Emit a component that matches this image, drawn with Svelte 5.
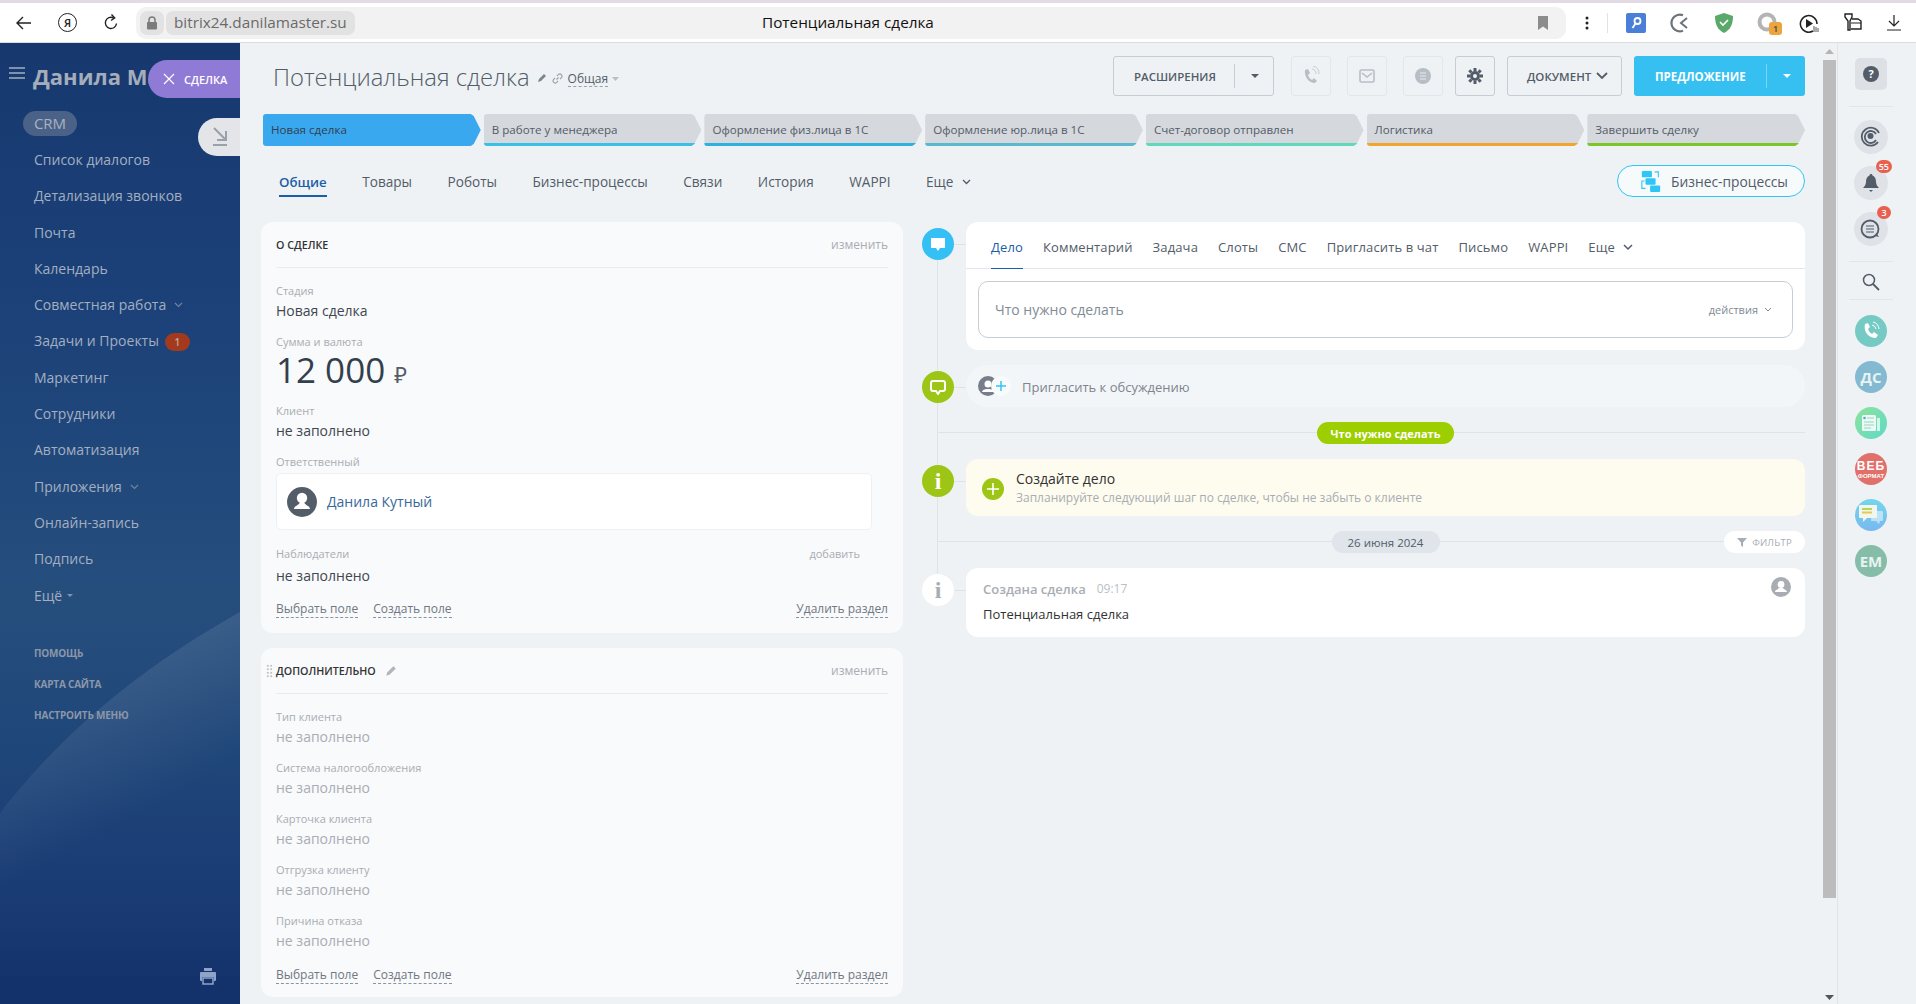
<script>
  const menu = [
    { t: 'Список диалогов' }, { t: 'Детализация звонков' }, { t: 'Почта' }, { t: 'Календарь' },
    { t: 'Совместная работа', chev: true }, { t: 'Задачи и Проекты', badge: '1' }, { t: 'Маркетинг' },
    { t: 'Сотрудники' }, { t: 'Автоматизация' }, { t: 'Приложения', chev: true }, { t: 'Онлайн-запись' },
    { t: 'Подпись' }, { t: 'Ещё', caret: true }
  ];
  const stages = [
    ['Новая сделка', '#39a8ef'], ['В работе у менеджера', '#39c0e6'], ['Оформление физ.лица в 1С', '#2fb1df'],
    ['Оформление юр.лица в 1С', '#5ab9cf'], ['Счет-договор отправлен', '#5fd9bb'], ['Логистика', '#f2a52d'], ['Завершить сделку', '#7cc726']
  ];
  const tabs = ['Товары', 'Роботы', 'Бизнес-процессы', 'Связи', 'История', 'WAPPI'];
  const ctabs = ['Комментарий', 'Задача', 'Слоты', 'СМС', 'Пригласить в чат', 'Письмо', 'WAPPI'];
  const extra = ['Тип клиента', 'Система налогообложения', 'Карточка клиента', 'Отгрузка клиенту', 'Причина отказа'];
</script>

<div class="app">
  <header class="browser">
    <div class="nav">
      <svg class="ic" width="20" height="20" viewBox="0 0 20 20"><path d="M17 10H3M9 4l-6 6 6 6" fill="none" stroke="#222" stroke-width="1.4"/></svg>
      <span class="ya">Я</span>
      <svg class="ic" width="20" height="20" viewBox="0 0 20 20"><path d="M15.5 10.5a5.6 5.6 0 1 1-3-5.6" fill="none" stroke="#222" stroke-width="1.4"/><path d="M10.5 1.5l3.2 3.4-3.6 2.6" fill="none" stroke="#222" stroke-width="1.4"/></svg>
    </div>
    <div class="addr">
      <span class="lock"><svg width="12" height="14" viewBox="0 0 12 14"><path d="M3 6V4a3 3 0 0 1 6 0v2" fill="none" stroke="#7b7b7b" stroke-width="1.5"/><rect x="1" y="6" width="10" height="7.5" rx="1" fill="#7b7b7b"/></svg></span>
      <span class="url">bitrix24.danilamaster.su</span>
      <span class="ptitle">Потенциальная сделка</span>
      <svg class="bm" width="12" height="14" viewBox="0 0 12 14"><path d="M1 0h10v14l-5-3.5L1 14z" fill="#8c8c8c"/></svg>
    </div>
    <div class="exts">
      <svg width="4" height="14" viewBox="0 0 4 14"><circle cx="2" cy="2" r="1.5" fill="#222"/><circle cx="2" cy="7" r="1.5" fill="#222"/><circle cx="2" cy="12" r="1.5" fill="#222"/></svg>
      <span class="sep"></span>
      <svg class="e1" width="20" height="20" viewBox="0 0 20 20"><rect width="20" height="20" rx="2" fill="#4a7fd8"/><circle cx="11.5" cy="8" r="3" fill="none" stroke="#fff" stroke-width="1.8"/><path d="M9.5 10.5L6.5 15" stroke="#fff" stroke-width="1.8"/></svg>
      <svg class="e2" width="20" height="20" viewBox="0 0 20 20"><path d="M13 2.2A8.4 8.4 0 1 0 13 17.8" fill="none" stroke="#6b7278" stroke-width="2.2"/><path d="M17 5l-6 5 6 5" fill="none" stroke="#6b7278" stroke-width="2"/></svg>
      <svg class="e3" width="20" height="20" viewBox="0 0 20 20"><path d="M10 0l9 3c0 9-3 14-9 17C4 17 1 12 1 3z" fill="#5aa96a"/><path d="M6 9l3 3 5-5" fill="none" stroke="#fff" stroke-width="1.6"/></svg>
      <span class="e4"><svg width="22" height="22" viewBox="0 0 22 22"><circle cx="10" cy="10" r="7.5" fill="none" stroke="#b4b4b4" stroke-width="4"/></svg><b>1</b></span>
      <svg class="e5" width="22" height="20" viewBox="0 0 22 20"><path d="M14 18a8.3 8.3 0 1 1 4-7" fill="none" stroke="#222" stroke-width="1.5"/><path d="M7 6l7 4.5L7 15z" fill="#222"/><path d="M15 13v6M17 14v5M19 15v4" stroke="#555" stroke-width="1"/></svg>
      <svg class="e6" width="18" height="20" viewBox="0 0 18 20"><path d="M1 1h7v3L6 8v9H4V8L1 4z" fill="none" stroke="#222" stroke-width="1.4"/><path d="M8 6h6l3 2v8H7" fill="none" stroke="#222" stroke-width="1.4"/><path d="M7 10h10" stroke="#222"/></svg>
      <svg class="e7" width="14" height="16" viewBox="0 0 14 16"><path d="M7 0v11M2 6l5 5 5-5M0 15h14" fill="none" stroke="#222" stroke-width="1.2"/></svg>
    </div>
  </header>

  <div class="body">
    <aside class="side">
      <svg class="side-wedge" width="240" height="961" viewBox="0 0 240 961">
        <defs><linearGradient id="wg" gradientUnits="userSpaceOnUse" x1="150" y1="610" x2="215" y2="730"><stop offset="0" stop-color="#fff" stop-opacity=".1"/><stop offset="1" stop-color="#fff" stop-opacity="0"/></linearGradient></defs>
        <path d="M240 569C150 620 70 680 0 770V961H240Z" fill="url(#wg)"/>
      </svg>
      <div class="brand">
        <svg width="16" height="12" viewBox="0 0 16 12"><path d="M0 1h16M0 6h16M0 11h16" stroke="#a3afc0" stroke-width="1.6"/></svg>
        <span>Данила Ма</span>
      </div>
      <div class="crm"><span>CRM</span></div>
      <ul class="menu">
        {#each menu as m}
          <li>
            {m.t}
            {#if m.chev}<svg class="chev" width="9" height="6" viewBox="0 0 9 6"><path d="M1 1l3.5 3.5L8 1" fill="none" stroke="#6f84a3" stroke-width="1.2"/></svg>{/if}
            {#if m.caret}<svg class="caretm" width="6" height="4" viewBox="0 0 6 4"><path d="M0 0h6L3 3z" fill="#7f93ad"/></svg>{/if}
            {#if m.badge}<b class="mbadge">{m.badge}</b>{/if}
          </li>
        {/each}
      </ul>
      <ul class="foot">
        <li>Помощь</li><li>Карта сайта</li><li>Настроить меню</li>
      </ul>
      <svg class="printer" width="16" height="17" viewBox="0 0 16 17"><path d="M4 0h8v3H4z" fill="#8fa3c8"/><path d="M1 4h14a1 1 0 0 1 1 1v7a1 1 0 0 1-1 1h-1V9H2v4H1a1 1 0 0 1-1-1V5a1 1 0 0 1 1-1z" fill="#8fa3c8"/><path d="M3 10h10v6H3z" fill="none" stroke="#8fa3c8" stroke-width="1.5"/></svg>
      <div class="close-pill"><svg width="12" height="12" viewBox="0 0 12 12"><path d="M1 1l10 10M11 1L1 11" stroke="#fff" stroke-width="1.2"/></svg><b>СДЕЛКА</b></div>
      <div class="pin-pill"><svg width="16" height="20" viewBox="0 0 16 20"><path d="M2 1l12 12M14 4v9H5M1 18h14" fill="none" stroke="#9aa1ab" stroke-width="2"/></svg></div>
    </aside>

    <main class="main">
      <div class="head">
        <h1>Потенциальная сделка</h1>
        <svg class="hi" width="10" height="10" viewBox="0 0 10 10"><path d="M1 9l1-3 5-5 2 2-5 5z" fill="#7d858f"/></svg>
        <svg class="hi" width="11" height="11" viewBox="0 0 11 11"><path d="M4.5 6.5l2-2M3 5L1.7 6.3a2 2 0 0 0 3 3L6 8M5 3l1.3-1.3a2 2 0 0 1 3 3L8 6" fill="none" stroke="#9aa1a9" stroke-width="1.1"/></svg>
        <span class="cat">Общая</span>
        <svg class="caret" width="7" height="4" viewBox="0 0 7 4"><path d="M0 0h7L3.5 4z" fill="#b9bfc6"/></svg>
        <div class="actions">
          <div class="btn ext"><span class="lbl">РАСШИРЕНИЯ</span><i class="vsep"></i><svg width="8" height="4" viewBox="0 0 8 4"><path d="M0 0h8L4 4z" fill="#535c69"/></svg></div>
          <div class="sq dim"><svg width="18" height="20" viewBox="0 0 18 20"><path d="M3 4l3-1 2 4-2 2c.6 2 2 4 4 5l2-2 3 3-2 2c-6 0-11-6-10-13z" fill="#b7bec6"/><path d="M10 3a5 5 0 0 1 4 5M11 0a8 8 0 0 1 6 8" fill="none" stroke="#c6ccd2"/></svg></div>
          <div class="sq dim"><svg width="16" height="14" viewBox="0 0 16 14"><rect x="1" y="1" width="14" height="12" rx="1.5" fill="none" stroke="#b7bec6" stroke-width="1.6"/><path d="M3 4l5 4 5-4" fill="none" stroke="#b7bec6" stroke-width="1.6"/></svg></div>
          <div class="sq dim"><svg width="18" height="18" viewBox="0 0 18 18"><circle cx="9" cy="9" r="8" fill="#b7bec6"/><path d="M6 6h6M6 9h6M6 12h6" stroke="#e9ecef" stroke-width="1.2"/></svg></div>
          <div class="sq gear"><svg width="18" height="18" viewBox="0 0 18 18"><path d="M9 5.5a3.5 3.5 0 1 0 0 7 3.5 3.5 0 0 0 0-7z" fill="none" stroke="#535c69" stroke-width="3"/><path d="M9 1v3M9 14v3M1 9h3M14 9h3M3.3 3.3l2.2 2.2M12.5 12.5l2.2 2.2M3.3 14.7l2.2-2.2M12.5 5.5l2.2-2.2" stroke="#535c69" stroke-width="3"/></svg></div>
          <div class="btn doc"><span class="lbl">ДОКУМЕНТ</span><svg width="12" height="8" viewBox="0 0 12 8"><path d="M1 1l5 5 5-5" fill="none" stroke="#535c69" stroke-width="1.8"/></svg></div>
          <div class="btn offer"><span class="lbl">ПРЕДЛОЖЕНИЕ</span><i class="vsep"></i><svg width="8" height="4" viewBox="0 0 8 4"><path d="M0 0h8L4 4z" fill="#fff"/></svg></div>
        </div>
      </div>

      <div class="stages">
        {#each stages as s, i}
          <div class="stage" class:on={i === 0} style="--c:{s[1]}"><span>{s[0]}</span></div>
        {/each}
      </div>

      <div class="tabsrow">
        <nav class="tabs">
          <span class="tab active">Общие</span>
          {#each tabs as t}<span class="tab">{t}</span>{/each}
          <span class="tab">Еще <svg width="9" height="6" viewBox="0 0 9 6"><path d="M1 1l3.5 3.5L8 1" fill="none" stroke="#535c69" stroke-width="1.3"/></svg></span>
        </nav>
        <div class="bp">
          <svg width="24" height="24" viewBox="0 0 24 24"><rect x="2" y="1" width="11" height="7" rx="1" fill="#2fc6f6"/><rect x="6" y="9" width="11" height="7" rx="1" fill="#2fc6f6"/><rect x="11" y="17" width="11" height="7" rx="1" fill="#2fc6f6"/><path d="M16 2h4v6M5 12H2v8h4" fill="none" stroke="#2fc6f6" stroke-width="1.2"/></svg>
          <span>Бизнес-процессы</span>
        </div>
      </div>

      <div class="cols">
        <section class="left">
          <div class="card c1">
            <div class="chead"><b>О сделке</b><span class="chg">изменить</span></div>
            <div class="lab">Стадия</div><div class="val">Новая сделка</div>
            <div class="lab g">Сумма и валюта</div>
            <div class="amount">12 000 <span class="rub">₽</span></div>
            <div class="lab g">Клиент</div><div class="val">не заполнено</div>
            <div class="lab g">Ответственный</div>
            <div class="user">
              <svg width="30" height="30" viewBox="0 0 30 30"><circle cx="15" cy="15" r="15" fill="#535c69"/><circle cx="15" cy="11" r="5.2" fill="#fff"/><path d="M7 22c0-3 5-4 5.5-6h5c.5 2 5.5 3 5.5 6z" fill="#fff"/></svg>
              <span>Данила Кутный</span>
            </div>
            <div class="lab obs"><span>Наблюдатели</span><span class="add">добавить</span></div>
            <div class="val v4">не заполнено</div>
            <div class="links"><span>Выбрать поле</span><span>Создать поле</span><span class="del">Удалить раздел</span></div>
          </div>

          <div class="card c2">
            <div class="dots"></div>
            <div class="chead"><b>Дополнительно <svg width="12" height="12" viewBox="0 0 10 10"><path d="M1 9l1-3 5-5 2 2-5 5z" fill="#b0b6bd"/></svg></b><span class="chg">изменить</span></div>
            {#each extra as e, i}
              <div class="lab" class:g={i > 0}>{e}</div><div class="val mute">не заполнено</div>
            {/each}
            <div class="links"><span>Выбрать поле</span><span>Создать поле</span><span class="del">Удалить раздел</span></div>
          </div>
        </section>

        <section class="tl">
          <div class="rail"></div>

          <div class="row">
            <span class="dot blue"><svg width="16" height="15" viewBox="0 0 16 15"><path d="M1 1h14v10H10l-2 3-2-3H1z" fill="#fff"/></svg></span>
            <div class="composer">
              <div class="ctabs">
                <span class="ct active">Дело</span>
                {#each ctabs as t}<span class="ct">{t}</span>{/each}
                <span class="ct">Еще <svg width="10" height="7" viewBox="0 0 10 7"><path d="M1 1l4 4 4-4" fill="none" stroke="#535c69" stroke-width="1.5"/></svg></span>
              </div>
              <div class="input">
                <span>Что нужно сделать</span>
                <em>действия <svg width="8" height="5" viewBox="0 0 8 5"><path d="M1 1l3 3 3-3" fill="none" stroke="#828b95" stroke-width="1"/></svg></em>
              </div>
            </div>
          </div>

          <div class="row">
            <span class="dot green"><svg width="16" height="16" viewBox="0 0 16 16"><path d="M3 2h10a2 2 0 0 1 2 2v6a2 2 0 0 1-2 2h-3l-2 3-2-3H3a2 2 0 0 1-2-2V4a2 2 0 0 1 2-2z" fill="none" stroke="#fff" stroke-width="2"/></svg></span>
            <div class="invite">
              <span class="inv-ic">
                <svg width="20" height="20" viewBox="0 0 20 20"><circle cx="10" cy="10" r="10" fill="#757e8a"/><circle cx="10" cy="8" r="3.5" fill="#fff"/><path d="M4 16c1-3 4-3 6-3s5 0 6 3z" fill="#fff"/></svg>
                <i><svg width="10" height="10" viewBox="0 0 10 10"><path d="M5 0v10M0 5h10" stroke="#2fc6f6" stroke-width="1.5"/></svg></i>
              </span>
              <span class="inv-t">Пригласить к обсуждению</span>
            </div>
          </div>

          <div class="sepr"><span class="todo">Что нужно сделать</span></div>

          <div class="row">
            <span class="dot green ii">i</span>
            <div class="todo-card">
              <span class="plus"><svg width="12" height="12" viewBox="0 0 12 12"><path d="M6 0v12M0 6h12" stroke="#fff" stroke-width="1.6"/></svg></span>
              <div class="tbody"><div class="tt">Создайте дело</div><div class="ts">Запланируйте следующий шаг по сделке, чтобы не забыть о клиенте</div></div>
            </div>
          </div>

          <div class="sepr date"><span class="dp">26 июня 2024</span><span class="flt"><svg width="10" height="9" viewBox="0 0 10 9"><path d="M0 0h10L6 4.5V9L4 7.5v-3z" fill="#a8adb4"/></svg>ФИЛЬТР</span></div>

          <div class="row">
            <span class="dot white ii">i</span>
            <div class="hist">
              <div class="hhead"><b>Создана сделка</b><span>09:17</span>
                <svg width="20" height="20" viewBox="0 0 20 20"><circle cx="10" cy="10" r="10" fill="#a8adb4"/><circle cx="10" cy="7.5" r="3.4" fill="#fff"/><path d="M4 15c0-2 3-2.500 4-4h4c1 1.500 4 2 4 4z" fill="#fff"/></svg>
              </div>
              <div class="htext">Потенциальная сделка</div>
            </div>
          </div>
        </section>
      </div>
    </main>

    <div class="scroll">
      <svg width="9" height="5" viewBox="0 0 9 5"><path d="M0 5L4.500 0 9 5z" fill="#b5b5b5"/></svg>
      <div class="thumb"></div>
      <svg class="sd" width="9" height="5" viewBox="0 0 9 5"><path d="M0 0L4.500 5 9 0z" fill="#555"/></svg>
    </div>

    <aside class="right">
      <div class="help"><svg width="16" height="16" viewBox="0 0 16 16"><circle cx="8" cy="8" r="8" fill="#535c69"/><text x="8" y="12" text-anchor="middle" font-size="11" font-weight="700" fill="#fff" font-family="Open Sans">?</text></svg></div>
      <hr />
      <div class="rb g1"><svg width="22" height="22" viewBox="0 0 22 22"><path d="M18 16a9 9 0 1 1 1-9" fill="none" stroke="#535c69" stroke-width="1.8"/><path d="M16 14a6 6 0 1 1 0-6" fill="none" stroke="#535c69" stroke-width="1.800"/><circle cx="10.500" cy="10" r="3" fill="#535c69"/></svg></div>
      <div class="rb g2"><svg width="18" height="20" viewBox="0 0 18 20"><path d="M9 1c1 0 1.500.7 1.500 1.500C13 3.500 14 6 14 9c0 3 2 5 3 6H1c1-1 3-3 3-6 0-3 1-5.500 3.500-6.500C7.500 1.700 8 1 9 1z" fill="#535c69"/><path d="M7 17h4l-2 2z" fill="#535c69"/></svg><b>55</b></div>
      <div class="rb g3"><svg width="22" height="22" viewBox="0 0 22 22"><circle cx="10" cy="11" r="8.500" fill="none" stroke="#535c69" stroke-width="1.800"/><path d="M6 8h8M6 11h8M6 14h8" stroke="#535c69" stroke-width="1.200"/><path d="M15 18l4 1-2-3z" fill="#535c69"/></svg><b>3</b></div>
      <hr class="h2" />
      <svg class="srch" width="18" height="18" viewBox="0 0 18 18"><circle cx="7" cy="7" r="5.500" fill="none" stroke="#535c69" stroke-width="1.500"/><path d="M11 11l6 6" stroke="#535c69" stroke-width="1.800"/></svg>
      <hr class="h3" />
      <div class="av" style="background:#75cbc4"><svg width="20" height="20" viewBox="0 0 20 20"><path d="M4 3l3-1 2 4-2 2c.6 2 2 4 4 5l2-2 4 3-2 3c-7 0-13-6-11-14z" fill="#fff"/><path d="M11 4a5 5 0 0 1 4 4M12 1a8 8 0 0 1 6 7" fill="none" stroke="#fff" stroke-width="1"/></svg></div>
      <div class="av" style="background:#84b9d2">ДС</div>
      <div class="av" style="background:linear-gradient(135deg,#8ee39c,#5fd9c6)"><svg width="20" height="20" viewBox="0 0 20 20"><rect x="1" y="2" width="14" height="16" rx="1.500" fill="#fff" opacity=".85"/><rect x="16" y="5" width="3" height="13" fill="#fff" opacity=".7"/><path d="M6 5h7M3 9h10M3 12h10M3 15h7" stroke="#9ad3c4"/><circle cx="3.500" cy="5" r="1.300" fill="#5aa3d8"/></svg></div>
      <div class="av web" style="background:#e2706a"><span class="w1">ВЕБ</span><span class="w2">ФОРМАТ</span></div>
      <div class="av" style="background:linear-gradient(180deg,#74d6ec,#79b8f0)"><svg width="26" height="22" viewBox="0 0 26 22"><path d="M14 7h10a1 1 0 0 1 1 1v8a1 1 0 0 1-1 1h-2l-1 3-3-3h-5z" fill="#fff" opacity=".5"/><path d="M2 1h16a1 1 0 0 1 1 1v11a1 1 0 0 1-1 1H9l-4 4v-4H2a1 1 0 0 1-1-1V2a1 1 0 0 1 1-1z" fill="#f3f6ee"/><path d="M4 5h10" stroke="#b5d65a" stroke-width="1.800"/><path d="M4 8.500h10" stroke="#e8c84e" stroke-width="1.800"/></svg></div>
      <div class="av" style="background:#86bda9">ЕМ</div>
    </aside>
  </div>
</div>

<style>
  :global(body) { margin: 0; background: #eef2f4; }
  .app { width: 1916px; height: 1004px; overflow: hidden; display: flex; flex-direction: column; font-family: "Open Sans", "Noto Sans", sans-serif; color: #535c69; }
  svg { display: block; flex: none; }

  .browser { height: 43px; box-sizing: border-box; flex: none; display: flex; align-items: center; background: #fff; border-top: 3px solid #e4dae4; border-bottom: 1px solid #dcdcdc; padding-bottom: 0; }
  .nav { display: flex; align-items: center; width: 136px; padding-left: 14px; box-sizing: border-box; gap: 24px; }
  .ya { width: 17px; height: 17px; border: 1.4px solid #222; border-radius: 50%; font-size: 11px; line-height: 17px; text-align: center; color: #222; font-weight: 600; }
  .addr { width: 1430px; height: 32px; border-radius: 10px; background: #f2f2f2; display: flex; align-items: center; padding: 0 4px; box-sizing: border-box; position: relative; }
  .lock { width: 24px; height: 24px; background: #e2e2e2; border-radius: 7px; display: flex; align-items: center; justify-content: center; margin-right: 2px; }
  .url { height: 24px; line-height: 23px; background: #e2e2e2; border-radius: 7px; padding: 0 8px; font-size: 15.300px; color: #6a6a6a; width: 189px; box-sizing: border-box; white-space: nowrap; }
  .ptitle { position: absolute; left: 626px; top: 0; line-height: 31px; font-size: 15.300px; color: #111; white-space: nowrap; }
  .bm { margin-left: auto; margin-right: 13px; }
  .exts { flex: 1; display: flex; align-items: center; padding-left: 19px; }
  .sep { width: 1px; height: 20px; background: #e3e3e3; margin: 0 18px 0 18px; }
  .e2 { margin-left: 24px; } .e3 { margin-left: 24px; }
  .e4 { margin-left: 23px; position: relative; width: 22px; height: 22px; }
  .e4 b { position: absolute; right: -3px; bottom: -1px; width: 13px; height: 13px; background: #eba43e; border-radius: 3px; font-size: 9px; line-height: 13px; text-align: center; color: #444; font-weight: 600; }
  .e5 { margin-left: 20px; } .e6 { margin-left: 23px; } .e7 { margin-left: 25px; }

  .body { flex: 1; display: flex; min-height: 0; }

  .side { width: 240px; flex: none; position: relative; overflow: hidden; background: linear-gradient(180deg, #16386f 0%, #1c4279 30%, #264e7d 58%, #1f4679 74%, #1a3c75 88%, #123069 100%); }
  .side-wedge { position: absolute; left: 0; top: 0; }
  .brand { height: 64px; display: flex; align-items: center; padding-left: 9px; gap: 8px; white-space: nowrap; color: #a5adba; font-size: 22px; font-weight: 700; box-sizing: border-box; position: relative; }
  .brand svg { margin-top: -4px; }
  .brand span { margin-top: 2px; }
  .crm { padding-left: 23px; height: 35px; position: relative; z-index: 1; }
  .crm span { display: inline-block; height: 25px; width: 54px; margin-top: 4px; line-height: 24px; border-radius: 13px; text-align: center; font-size: 15px; color: #a9b2c0; background: #4a6287; }
  .menu { list-style: none; margin: 0; padding: 0 0 0 34px; position: relative; }
  .menu li { height: 36.300px; line-height: 36.300px; font-size: 14px; color: #a3afc0; display: flex; align-items: center; white-space: nowrap; }
  .chev { margin-left: 8px; }
  .caretm { margin-left: 5px; }
  .mbadge { margin-left: 6px; width: 25px; height: 18px; line-height: 18px; background: #a33a1e; color: #c7a79e; border-radius: 9px; text-align: center; font-size: 10px; font-weight: 600; }
  .foot { list-style: none; margin: 24px 0 0; padding: 0 0 0 34px; position: relative; }
  .foot li { height: 31px; line-height: 31px; font-size: 10px; font-weight: 700; text-transform: uppercase; color: #8b97a8; letter-spacing: -.2px; }
  .printer { position: absolute; left: 200px; top: 925px; }
  .close-pill { position: absolute; left: 148px; top: 17px; width: 92px; height: 38px; background: #8f7ad6; border-radius: 19px 0 0 19px; display: flex; align-items: center; gap: 9px; padding-left: 15px; box-sizing: border-box; color: #fff; font-size: 11px; }
  .close-pill b { font-weight: 600; }
  .pin-pill { position: absolute; left: 198px; top: 75px; width: 42px; height: 38px; background: #e3e5e9; border-radius: 19px 0 0 19px; display: flex; align-items: center; justify-content: center; padding-left: 2px; box-sizing: border-box; }

  .main { width: 1582px; flex: none; box-sizing: border-box; padding: 13px 17px 0 21px; overflow: hidden; }

  .head { height: 40px; display: flex; align-items: center; padding-left: 12px; }
  h1 { margin: 0 5px 0 0; font-size: 23.800px; font-weight: 300; color: #535c69; white-space: nowrap; line-height: 40px; position: relative; top: 1px; }
  .hi { margin: 4px 3px 0 2px; }
  .cat { font-size: 12px; color: #535c69; border-bottom: 1px dashed #9aa1a9; margin-left: 2px; margin-top: 6px; line-height: 14px; }
  .caret { margin: 6px 0 0 4px; }
  .actions { margin-left: auto; display: flex; }
  .btn, .sq { height: 40px; box-sizing: border-box; border-radius: 3px; display: flex; align-items: center; justify-content: center; }
  .lbl { font-size: 11.500px; font-weight: 600; white-space: nowrap; }
  .btn { border: 1px solid #c6cdd3; }
  .ext { width: 161px; padding-left: 20px; justify-content: flex-start; }
  .vsep { width: 1px; height: 24px; background: #c6cdd3; margin: 0 16px 0 18px; }
  .sq { width: 40px; border: 1px solid #e3e7ea; }
  .ext + .sq { margin-left: 17px; }
  .sq + .sq { margin-left: 16px; }
  .sq.gear { margin-left: 12px; border-color: #c6cdd3; }
  .doc { width: 115px; margin-left: 12px; gap: 5px; justify-content: flex-start; padding-left: 19px; }
  .offer { width: 171px; margin-left: 12px; border: 0; background: #36c0f1; color: #fff; padding-left: 21px; justify-content: flex-start; }
  .offer .lbl { font-weight: 700; }
  .offer .vsep { background: #7ad7f6; margin: 0 16px 0 20px; }

  .stages { display: flex; gap: 3px; margin-top: 18px; margin-left: 2px; height: 32px; }
  .stage { flex: 1; background: #d5d8dc; border-bottom: 3px solid var(--c); box-sizing: border-box; border-radius: 3px 0 0 3px; padding: 0 0 0 8px; line-height: 32px; font-size: 11.600px; color: #535c69; clip-path: polygon(0 0, calc(100% - 10px) 0, calc(100% - 7px) 2px, 100% 50%, calc(100% - 7px) calc(100% - 2px), calc(100% - 10px) 100%, 0 100%); white-space: nowrap; }
  .stage.on { background: #39a8ef; border-bottom: 0; line-height: 32px; color: #333f50; }

  .tabsrow { height: 32px; margin-top: 19px; margin-left: 18px; display: flex; align-items: center; justify-content: space-between; }
  .tabs { display: flex; gap: 35.500px; font-size: 13.600px; font-weight: 500; height: 32px; }
  .tab { line-height: 36px; position: relative; white-space: pre; display: flex; align-items: center; gap: 5px; padding-top: 1px; box-sizing: border-box; }
  .tab.active { color: #1c5da8; font-weight: 600; font-size: 13.300px; }
  .tab.active::after { content: ""; position: absolute; left: 0; right: 0; bottom: 0; height: 2px; background: #1c5da8; }
  .bp { width: 188px; height: 32px; box-sizing: border-box; border: 1px solid #2fc6f6; border-radius: 16px; display: flex; align-items: center; justify-content: center; gap: 9px; font-size: 13.800px; font-weight: 500; background: #f7fafb; padding-left: 6px; }
  .bp svg { width: 22px; height: 22px; }

  .cols { display: flex; gap: 19px; margin-top: 25px; }
  .left { width: 642px; flex: none; display: flex; flex-direction: column; gap: 15px; }
  .card { background: #f9fafb; border-radius: 12px; padding: 0 15px 13px; position: relative; }
  .card.c1 { padding-bottom: 15px; }
  .chead { height: 45px; border-bottom: 1px solid #e9ecef; display: flex; align-items: center; justify-content: space-between; margin-bottom: 15px; }
  .chead b { font-size: 10.700px; font-weight: 600; text-transform: uppercase; color: #333; display: flex; align-items: center; gap: 9px; }
  .chg { font-size: 12px; color: #a8adb4; }
  .lab { font-size: 11px; line-height: 16px; color: #a8adb4; }
  .lab.g { margin-top: 13px; }
  .val { font-size: 14px; line-height: 20px; margin-top: 2px; color: #404750; }
  .val.mute { color: #a8adb4; }
  .amount { font-size: 35px; height: 40px; line-height: 40px; color: #333f4d; white-space: nowrap; }
  .rub { font-size: 22px; color: #535c69; }
  .user { height: 57px; box-sizing: border-box; margin-top: 3px; margin-right: 16px; background: #fff; border: 1px solid #eef1f3; border-radius: 5px; display: flex; align-items: center; padding-left: 10px; gap: 10px; font-size: 14px; color: #38689a; }
  .obs { display: flex; justify-content: space-between; margin-top: 16px; padding-right: 28px; }
  .v4 { margin-top: 4px; }
  .links { margin-top: 14px; display: flex; gap: 15px; font-size: 12px; line-height: 20px; color: #6f7782; }
  .c2 .links { margin-top: 15px; }
  .links span { border-bottom: 1px dashed #8c939c; line-height: 17px; height: 17px; }
  .links .del { margin-left: auto; }
  .dots { position: absolute; left: 5px; top: 16px; width: 7px; height: 14px; background-image: radial-gradient(circle, #b9bfc6 1px, transparent 1.200px); background-size: 3.500px 3.500px; }

  .tl { flex: 1; display: flex; flex-direction: column; gap: 15px; position: relative; }
  .rail { position: absolute; left: 15px; top: 22px; width: 1px; height: 346px; background: #dfe3e8; }
  .row { display: flex; gap: 12px; align-items: flex-start; position: relative; }
  .row::before { content: ""; position: absolute; left: 32px; top: 22px; width: 12px; height: 1px; background: #dfe3e8; }
  .dot { width: 32px; height: 32px; flex: none; border-radius: 50%; margin-top: 6px; display: flex; align-items: center; justify-content: center; position: relative; z-index: 1; }
  .dot.blue { background: #35c0f5; }
  .dot.green { background: #9dc515; }
  .dot.white { background: #fff; color: #a8adb4; }
  .ii { font-family: "Liberation Serif", serif; font-weight: 700; font-size: 24px; color: #fff; line-height: 32px; }
  .dot.white.ii { color: #a8adb4; }
  .composer { flex: 1; height: 128px; background: #fff; border-radius: 12px; }
  .ctabs { height: 46px; border-bottom: 1px solid #e4e7ea; display: flex; gap: 20px; padding-left: 25px; font-size: 13px; line-height: 50px; letter-spacing: .13px; }
  .ct { height: 46px; white-space: pre; display: flex; align-items: center; gap: 5px; padding-top: 4px; box-sizing: border-box; }
  .ct.active { color: #1c5da8; border-bottom: 1px solid #1c5da8; height: 47px; }
  .input { margin: 12px 12px 0; height: 57px; box-sizing: border-box; border: 1px solid #c6cdd3; border-radius: 10px; display: flex; align-items: center; justify-content: space-between; padding: 0 20px 0 16px; font-size: 14px; color: #828b95; }
  .input em { font-style: normal; font-size: 11px; display: flex; align-items: center; gap: 6px; }
  .invite { flex: 1; height: 42px; background: #f3f6f8; border-radius: 21px; display: flex; align-items: center; padding-left: 12px; gap: 10px; font-size: 13px; color: #7d858f; }
  .inv-t { padding-top: 1px; }
  .inv-ic { display: flex; align-items: center; width: 34px; }
  .inv-ic svg { flex: none; }
  .inv-ic i { width: 20px; height: 20px; margin-left: -7px; background: #f8fafb; border-radius: 50%; display: flex; align-items: center; justify-content: center; position: relative; }
  .sepr { height: 22px; margin-left: 16px; position: relative; display: flex; align-items: center; justify-content: center; padding-left: 28px; }
  .sepr::before { content: ""; position: absolute; left: 0; right: 0; top: 10px; height: 1px; background: #dfe3e8; }
  .todo { position: relative; width: 137px; height: 22px; line-height: 23px; background: #9dcf00; color: #fff; font-size: 11px; font-weight: 700; text-align: center; border-radius: 11px; }
  .todo-card { flex: 1; height: 57px; background: #fefcee; border-radius: 12px; display: flex; align-items: center; padding-left: 16px; gap: 12px; }
  .plus { width: 22px; height: 22px; background: #9dc515; border-radius: 50%; display: flex; align-items: center; justify-content: center; margin-top: 2px; }
  .tbody { padding-top: 4px; }
  .tt { font-size: 14px; line-height: 18px; color: #333; margin-top: -3px; }
  .ts { font-size: 12px; line-height: 16px; color: #a8adb4; margin-top: 2px; }
  .dp { position: relative; width: 108px; height: 22px; line-height: 24px; background: #dfe5ea; border-radius: 11px; text-align: center; font-size: 11.500px; color: #535c69; }
  .flt { position: absolute; right: 0; top: 0; width: 81px; height: 22px; background: #fff; border-radius: 11px; display: flex; align-items: center; justify-content: center; gap: 5px; font-size: 9.500px; color: #a8adb4; letter-spacing: .2px; }
  .hist { flex: 1; height: 69px; background: #fff; border-radius: 12px; padding: 0 14px 0 17px; }
  .hhead { height: 33px; padding-top: 8px; box-sizing: border-box; display: flex; align-items: center; gap: 11px; font-size: 12px; color: #b9bfc6; }
  .hhead b { font-size: 13px; font-weight: 600; color: #a8adb4; }
  .hhead svg { margin-left: auto; margin-top: -4px; }
  .htext { font-size: 13px; line-height: 20px; color: #333; margin-top: 3px; }

  .scroll { width: 15px; flex: none; display: flex; flex-direction: column; align-items: center; padding-top: 6px; background: #eef2f4; position: relative; box-sizing: border-box; }
  .thumb { width: 13px; height: 838px; background: #bcbcbc; margin-top: 6px; }
  .sd { position: absolute; bottom: 4px; left: 3px; }
  .right { flex: 1; border-left: 1px solid #e2e5e8; background: #eff2f5; position: relative; display: flex; flex-direction: column; align-items: center; padding: 15px 12px 0 0; }
  .help { width: 32px; height: 32px; background: #dde0e4; border-radius: 5px; display: flex; align-items: center; justify-content: center; flex: none; }
  hr { width: 44px; border: 0; height: 1px; background: #e3e6e9; margin: 16px 0 13px; flex: none; }
  .rb { width: 34px; height: 34px; background: #dfe3e8; border-radius: 50%; display: flex; align-items: center; justify-content: center; position: relative; margin-bottom: 12px; flex: none; }
  .rb b { position: absolute; top: -6px; right: -4px; min-width: 10px; padding: 0 3px; height: 13px; line-height: 13px; background: #e9604f; color: #fff; border-radius: 7px; font-size: 9px; font-weight: 600; text-align: center; }
  .g3 b { right: -3px; min-width: 8px; }
  .h2 { margin: 3px 0 11px; }
  .h3 { margin: 8px 0 15px; }
  .av { width: 32px; height: 32px; flex: none; margin-bottom: 14px; border-radius: 50%; display: flex; align-items: center; justify-content: center; color: #e8f4f2; font-size: 15px; font-weight: 700; overflow: hidden; }
  .web { flex-direction: column; color: #fff; font-family: "Liberation Sans", sans-serif; }
  .w1 { font-size: 12px; letter-spacing: 1px; line-height: normal; font-weight: 700; }
  .w2 { font-size: 6px; line-height: normal; font-weight: 700; }
</style>
